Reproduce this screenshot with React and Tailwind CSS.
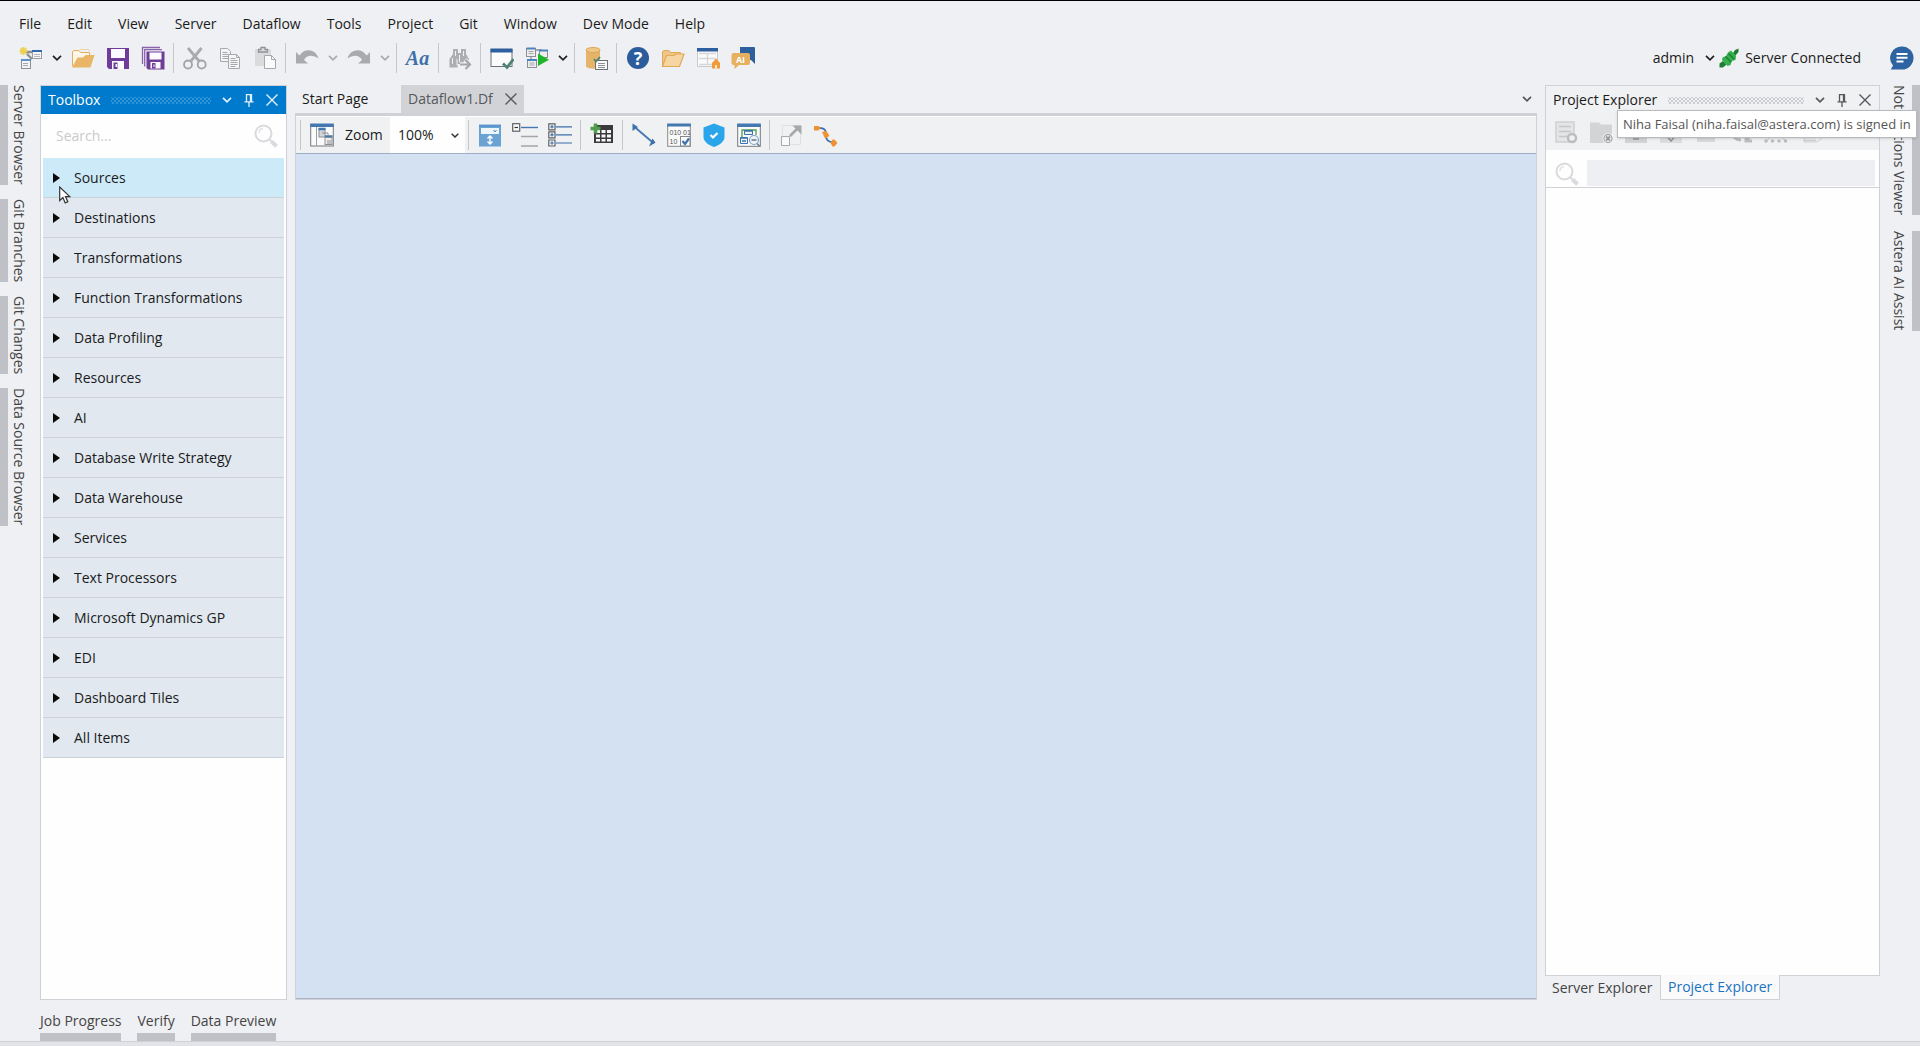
import { useState } from "react";

const menus = ["File", "Edit", "View", "Server", "Dataflow", "Tools", "Project", "Git", "Window", "Dev Mode", "Help"];

const toolboxItems = [
    "Sources",
    "Destinations",
    "Transformations",
    "Function Transformations",
    "Data Profiling",
    "Resources",
    "AI",
    "Database Write Strategy",
    "Data Warehouse",
    "Services",
    "Text Processors",
    "Microsoft Dynamics GP",
    "EDI",
    "Dashboard Tiles",
    "All Items",
];

function Svg({ children, size = 24, className = "" }) {
    return (
        <svg width={size} height={size} viewBox="0 0 24 24" fill="none" className={className} aria-hidden="true">
            {children}
        </svg>
    );
}

function Chevron({ className = "text-[#222]" }) {
    return (
        <svg width="10" height="6" viewBox="0 0 10 6" fill="none" className={className} aria-hidden="true">
            <path d="M1 .8 5 4.8 9 .8" stroke="currentColor" strokeWidth="1.7" />
        </svg>
    );
}

function CloseIcon() {
    return (
        <svg width="12" height="12" viewBox="0 0 12 12" aria-hidden="true">
            <path d="M.5.5l11 11M11.5.5l-11 11" stroke="currentColor" strokeWidth="1.4" />
        </svg>
    );
}

function PinIcon() {
    return (
        <svg width="10" height="13" viewBox="0 0 10 13" fill="none" aria-hidden="true">
            <path d="M2.5 7.500V.7h5v6.800M.5 7.900h9M5 8v5M6.500 1v6.500" stroke="currentColor" strokeWidth="1.3" />
        </svg>
    );
}

function SearchIcon() {
    return (
        <svg width="24" height="24" viewBox="0 0 24 24" fill="none" aria-hidden="true">
            <circle cx="9.500" cy="9.500" r="8" stroke="#d9dadd" strokeWidth="2" />
            <path d="M5 9a4.500 4.500 0 0 1 4-4.500" stroke="#e3e4e6" strokeWidth="1.500" />
            <path d="m15.500 15.500 2 2" stroke="#d9dadd" strokeWidth="2" />
            <path d="m17.500 17.500 5 4.700" stroke="#d9dadd" strokeWidth="4" />
        </svg>
    );
}

/* ---- main toolbar icons ---- */

function NewFlowIcon() {
    return (
        <Svg>
            <path d="M7 6h7M8 8l5 5" stroke="#8c8f94" strokeWidth="2.400" />
            <rect x="13.500" y="4.500" width="9" height="8" fill="#f4f4f4" stroke="#999da3" />
            <path d="M13 5h10" stroke="#2f69ae" strokeWidth="2" />
            <path d="M15 8.500h6M15 10.500h6" stroke="#b5b8bd" />
            <rect x="2.500" y="13.500" width="9" height="9" fill="#f4f4f4" stroke="#8c9097" />
            <path d="M2 14h10" stroke="#5d92c8" strokeWidth="2" />
            <path d="M4 17.500h5M4 19.500h5" stroke="#a5a8ad" />
            <path d="M4.500 1v8M.5 5h8M1.700 2.200l5.600 5.600M7.300 2.200 1.700 7.800" stroke="#efd04f" strokeWidth="1.800" />
        </Svg>
    );
}

function FolderIcon() {
    return (
        <Svg>
            <path d="M1.500 20V5.500L3 4.500h5l1.500 2h9v4" fill="#fdf6ea" stroke="#e5ae5c" />
            <path d="M9 3.500h8l2 1.500" stroke="#ecd2a6" />
            <path d="M1 21.500 6.500 11.500H12l2.500-2.500H23.500L19.500 21.500z" fill="#e9b566" />
        </Svg>
    );
}

function SaveIcon() {
    return (
        <Svg>
            <path d="M1 2h22v21H3l-2-2z" fill="#6f3c97" />
            <path d="M5 3h14v9H5z" fill="#fbfaff" />
            <path d="M6 15h12v8H6z" fill="#fbfaff" />
            <path d="M7.500 16.500h4v6.500h-4z" fill="#6f3c97" />
            <path d="M9.500 18h1.500v3H9.500z" fill="#fbfaff" />
        </Svg>
    );
}

function SaveAllIcon() {
    return (
        <Svg>
            <path d="M1.500 18V1.500H19M3.700 20.500V3.700H21" stroke="#8a62ab" strokeWidth="1.300" />
            <path d="M5.500 5.500H23.500V23.500H7l-1.500-1.500z" fill="#6f3c97" />
            <path d="M8.500 6.500h12v7h-12z" fill="#fbfaff" />
            <path d="M9.500 16h10v6.500h-10z" fill="#fbfaff" />
            <path d="M11 17h3.500v5.500H11z" fill="#6f3c97" />
            <path d="M12.500 18.500h1v2.500h-1z" fill="#fbfaff" />
        </Svg>
    );
}

function CutIcon() {
    return (
        <Svg>
            <path d="M5 2 16 15M18.500 2 8 15" stroke="#a9aaad" strokeWidth="2.800" />
            <circle cx="5" cy="18.500" r="4" stroke="#a2a3a6" strokeWidth="1.800" />
            <circle cx="18.700" cy="18.500" r="4" stroke="#a2a3a6" strokeWidth="1.800" />
        </Svg>
    );
}

function CopyIcon() {
    return (
        <Svg>
            <path d="M2.500 2.500h7l3 3v10h-10z" fill="#f5f5f6" stroke="#a7a8ab" />
            <path d="M4.500 6.500h5M4.500 8.500h6M4.500 10.500h6M4.500 12.500h6" stroke="#a7a8ab" />
            <path d="M10.500 8.500h8l3 3v11h-11z" fill="#f5f5f6" stroke="#a7a8ab" />
            <path d="M18.500 8.500v3h3M12.500 12.500h5M12.500 14.500h7M12.500 16.500h7M12.500 18.500h7M12.500 20.500h5" stroke="#a7a8ab" />
        </Svg>
    );
}

function PasteIcon() {
    return (
        <Svg>
            <path d="M2 3h16v7h-7v10H2z" fill="#dadbdd" />
            <path d="M5.500 3.500H8v-2h4v2h2.500V6h-9z" fill="#dedfe1" stroke="#909194" strokeWidth="1.300" />
            <path d="M11.500 9.500h7l4 4v9h-11z" fill="#fafafa" stroke="#a7a8ab" />
            <path d="M18.500 9.500v4h4" stroke="#a7a8ab" />
        </Svg>
    );
}

function UndoIcon({ flip = false }) {
    return (
        <Svg className={flip ? "-scale-x-100" : ""}>
            <path d="M1 6v11.500h12L9 14C11 9.500 17 8 23.500 12.500 21 3 9.500 1.500 4.500 9.500z" fill="#a9aaad" />
        </Svg>
    );
}

function BinocularsIcon() {
    return (
        <Svg>
            <path d="M5 3h5v4h3V3h5v5l3 5v5H1.500v-5L5 8z" fill="#adaeb1" />
            <path d="M1.500 17.500h8v4h-8z" fill="#adaeb1" />
            <path d="M4.500 12v6M7.500 5v5M11.500 9v7M15.500 5v5M9 13v6" stroke="#f0f1f3" strokeWidth="1" />
            <path d="M12 18.500h8M17 14l5 4.500-5 4.500" stroke="#f0f1f3" strokeWidth="4.500" />
            <path d="M12 18.500h9.500M17.500 14l4.500 4.500-4.500 4.500" stroke="#a5a6a9" strokeWidth="2.200" />
        </Svg>
    );
}

function WindowCheckIcon() {
    return (
        <Svg>
            <rect x="1" y="3.500" width="21" height="17" fill="#fbfbfb" stroke="#6e7175" />
            <path d="M.5 2.500h22v4H.5z" fill="#2d5f9f" />
            <path d="m13 17.500 4 4L23.500 13" stroke="#4d8375" strokeWidth="2.800" />
        </Svg>
    );
}

function RunFlowIcon() {
    return (
        <Svg>
            <path d="M10 4h6v5M6 9v6" stroke="#8c8f94" strokeWidth="1.300" />
            <rect x="1.500" y="2.500" width="9" height="8" fill="#eee" stroke="#8c8f94" />
            <rect x="14.500" y="4.500" width="8" height="7" fill="#eee" stroke="#8c8f94" />
            <rect x="2.500" y="13.500" width="9" height="8" fill="#eee" stroke="#8c8f94" />
            <path d="M14 4.500h9M2 14h10M1.500 2.500h9" stroke="#4a83bd" strokeWidth="1.800" />
            <path d="M3.500 5.500h5M3.500 7.500h5M4.500 17h5M4.500 19h5" stroke="#a3a6aa" />
            <path d="M13 7.500 24 13.700 13 20z" fill="#1eb52a" />
        </Svg>
    );
}

function DatabaseIcon() {
    return (
        <Svg>
            <path d="M2 4v16c0 3.500 13 3.500 14 0V4z" fill="#e5b469" />
            <ellipse cx="9" cy="4" rx="7" ry="2.500" fill="#efc888" stroke="#dda654" />
            <rect x="11.500" y="14.500" width="12" height="9" fill="#fafafa" stroke="#6e7175" />
            <path d="M14 17.500h7M14 19.500h7M14 21.500h7" stroke="#8c8f94" />
            <path d="m10 13 2 2.500 4-4.500" stroke="#4d8375" strokeWidth="1.800" />
        </Svg>
    );
}

function HelpIcon() {
    return (
        <Svg>
            <circle cx="12" cy="12" r="11" fill="#2b5c9b" />
            <text x="12" y="18.500" textAnchor="middle" fontSize="18" fontWeight="700" fill="#fff" fontFamily="Open Sans, sans-serif">?</text>
        </Svg>
    );
}

function OpenFolderIcon() {
    return (
        <Svg>
            <path d="M1.500 20V5.500L3 4.500h5l1.500 2h10v4" fill="#edc688" stroke="#e2a955" />
            <path d="M1.500 20.500 5.500 9.500H13l2-1.500h8L18.500 20.500z" fill="#f5d6a3" stroke="#e2a955" strokeWidth="1.200" />
        </Svg>
    );
}

function TableHomeIcon() {
    return (
        <Svg>
            <rect x="1.500" y="3.500" width="20" height="17" fill="#fafafa" stroke="#c9cacd" />
            <path d="M1 2h21v3.500H1z" fill="#2d5f9f" />
            <path d="M3 12.500h17M11.500 7v12M3 7.500h17M3 18.500h17" stroke="#d5d6d9" strokeWidth="1.300" />
            <path d="m20 12.500 4 4.500v5.500h-8V17z" fill="#f09a3a" />
            <path d="M19.300 19h1.500v3.500h-1.500z" fill="#fff" />
        </Svg>
    );
}

function AiChatIcon() {
    return (
        <svg width="26" height="24" viewBox="0 0 26 24" aria-hidden="true">
            <path d="M10 1h14a1 1 0 0 1 1 1v16l-4-4H10z" fill="#2d5f9f" />
            <path d="M3.500 7h14.500a2 2 0 0 1 2 2v8a2 2 0 0 1-2 2H9l-4.500 4V19h-1a2 2 0 0 1-2-2V9a2 2 0 0 1 2-2z" fill="#e6b05f" />
            <text x="10.500" y="16.500" textAnchor="middle" fontSize="9" fontWeight="700" fill="#fff" fontFamily="Open Sans, sans-serif">AI</text>
        </svg>
    );
}

function PlugIcon() {
    return (
        <svg width="20" height="20" viewBox="0 0 20 20" fill="none" aria-hidden="true">
            <path d="M.5 19.500v-4L4 13l3.500 3.500L4 19.500z" fill="#1f7d34" />
            <path d="m13.500 6 2.500-4 3.500-1.500V4L16 8z" fill="#1f7d34" />
            <path d="M3.500 9.500 7 8l2-3.500 3-2 5 5.500-.5 4-3.500 1-1.500 4-3 1-5.500-6z" fill="#34b04c" />
            <path d="m6.500 8.500 5.500 5.500M9.500 5.500l5.500 5.500" stroke="#1d7a33" strokeWidth="1.300" />
        </svg>
    );
}

function ChatIcon() {
    return (
        <Svg>
            <path d="M12 .5A11.500 11.500 0 1 1 12 23.500H.8l2.200-4A11.500 11.500 0 0 1 12 .5z" fill="#2f64a3" />
            <path d="M6.500 8h11M6.500 11.700h11M6.500 15.500h7" stroke="#fff" strokeWidth="1.900" />
        </Svg>
    );
}

/* ---- dataflow toolbar icons ---- */

function LayoutIcon() {
    return (
        <Svg>
            <rect x=".7" y="1.500" width="22.600" height="21.500" fill="#fbfbfb" stroke="#75787d" />
            <path d="M.2.500h23.600v3.500H.2z" fill="#4478b0" />
            <path d="M6.500 4v19" stroke="#9a9da1" />
            <rect x="9" y="6" width="6" height="8" fill="#d3d5d8" stroke="#8c8f94" />
            <path d="M8.500 6h7M15 13.500h7.500" stroke="#4478b0" strokeWidth="2.400" />
            <rect x="15" y="14.500" width="7" height="7" fill="#eee" stroke="#8c8f94" />
            <path d="M17 18h4M17 20h4M12 10h6v3" stroke="#8c8f94" />
        </Svg>
    );
}

function ExpandAllIcon() {
    return (
        <Svg>
            <path d="M1 1.500h22v22H1z" fill="#6ba2d4" />
            <path d="M3 5h18v6H3z" fill="#eef5fb" />
            <path d="M1 3h22" stroke="#4a8bc5" />
            <path d="m15.500 7 1.500 2 1.500-2" stroke="#4a8bc5" />
            <path d="M12 13v8M9.500 15.500 12 13l2.500 2.500M9.500 18.500 12 21l2.500-2.500" stroke="#fff" strokeWidth="1.400" />
        </Svg>
    );
}

function CollapseIcon() {
    return (
        <svg width="26" height="24" viewBox="0 0 26 24" fill="none" aria-hidden="true">
            <rect x=".7" y=".7" width="7" height="7.500" fill="#fafafa" stroke="#5c5f63" strokeWidth="1.200" />
            <path d="M2.500 4.500h3.500" stroke="#333" strokeWidth="1.200" />
            <path d="M9 4.500h17" stroke="#4478b0" strokeWidth="1.400" />
            <path d="M9 13.500h17M9 23h17" stroke="#a3a6aa" strokeWidth="1.300" />
        </svg>
    );
}

function ExpandListIcon() {
    return (
        <Svg>
            <path d="M.8.800h6.200v6H.8zM.8 8.800h6.200v6H.8zM.8 17h6.200v6H.8z" fill="#fafafa" stroke="#5c5f63" strokeWidth="1.200" />
            <path d="M2.200 3.800h3.500M2.200 11.800h3.500M2.200 20h3.500M4 2v3.600M4 10v3.600M4 18.200v3.600M8 3.800h16M8 11.800h16M8 20h16" stroke="#3b71ac" strokeWidth="1.200" />
        </Svg>
    );
}

function AddGridIcon() {
    return (
        <Svg>
            <path d="M4 2h19v18H4z" fill="#3b3b3d" />
            <path d="M6 7h4v3H6zM11.500 7h4v3h-4zM17 7h4v3h-4zM6 11.500h4v3H6zM11.500 11.500h4v3h-4zM17 11.500h4v3h-4zM6 16h4v2.500H6zM11.500 16h4v2.500h-4zM17 16h4v2.500h-4z" fill="#f6f6f6" />
            <path d="M5.500.500v10M.5 5.500h10" stroke="#4f9e4d" strokeWidth="3.600" />
        </Svg>
    );
}

function LinkIcon() {
    return (
        <Svg>
            <path d="M2 3.500 22 20.500" stroke="#4478b0" strokeWidth="1.800" />
            <path d="M.5.500 6 4 .5 8zM23.500 19.500 17 23.500l3.500-8z" fill="#3b71ac" />
        </Svg>
    );
}

function BinaryIcon() {
    return (
        <Svg>
            <rect x=".7" y="1.500" width="22.600" height="21.800" fill="#fafafa" stroke="#85888c" />
            <path d="M.2.500h23.600v3H.2z" fill="#4478b0" />
            <text x="2.500" y="12" fontSize="7" fill="#555" fontFamily="Liberation Sans, sans-serif">010 01</text>
            <text x="2.500" y="21" fontSize="7" fill="#555" fontFamily="Liberation Sans, sans-serif">10</text>
            <rect x="13.500" y="13.500" width="9.500" height="9.500" fill="#fafafa" stroke="#85888c" />
            <path d="m15.500 18 2.500 3 4-5.500" stroke="#3b71ac" strokeWidth="2.200" />
        </Svg>
    );
}

function ShieldIcon() {
    return (
        <Svg>
            <path d="M12 .500 22.500 4.500V14c0 4.500-5 8-10.500 10C6.500 22 1.500 18.500 1.500 14V4.500z" fill="#2ba5ea" />
            <path d="m8.500 12 2.500 2.500 4.500-4.500" stroke="#fff" strokeWidth="2.200" />
        </Svg>
    );
}

function PreviewIcon() {
    return (
        <Svg>
            <rect x=".7" y="1.500" width="22.600" height="21.800" fill="#fafafa" stroke="#75787d" />
            <path d="M.2.500h23.600v3.500H.2z" fill="#4478b0" />
            <path d="M5 14V7h14v5" stroke="#4f9e4d" strokeWidth="1.300" />
            <path d="M7.500 7.500h8v4h-8zM3.500 14.500h7v6h-7z" fill="#eef3f8" stroke="#3b71ac" />
            <path d="M7.500 8h8M3.500 15h7M5 18h4" stroke="#3b71ac" strokeWidth="1.500" />
            <circle cx="17" cy="17" r="4.500" fill="#eef3f8" stroke="#7ba3cb" strokeWidth="1.200" />
            <path d="M14.500 17h5M20 20.500l2.500 2.500" stroke="#6b7785" strokeWidth="1.400" />
        </Svg>
    );
}

function ResizeIcon() {
    return (
        <Svg>
            <path d="M3.500 2.500h18v19h-18z" stroke="#dfe0e2" />
            <path d="M2.500 13.500h8v9h-8z" fill="#fafafa" stroke="#a7a8ab" />
            <path d="m11 13 8-8" stroke="#a7a8ab" strokeWidth="2.600" />
            <path d="M13.500 2.500h9v9z" fill="#a7a8ab" />
        </Svg>
    );
}

function RouteIcon() {
    return (
        <Svg>
            <path d="M2 5c10-1 10 3 10 7s1 8 10 7" stroke="#3b71ac" strokeWidth="1.700" />
            <path d="M0 3h4.500l2 2-2 2.500H0zM8 9l4.500-1 3 5-4.500 2.500zM16.500 20l2-3.500h2L23.500 20l-3 3.500h-2z" fill="#f09233" />
        </Svg>
    );
}

/* ---- project explorer icons ---- */

function ServerGearIcon() {
    return (
        <Svg>
            <path d="M2 2h18v20H2z" fill="#e4e5e7" stroke="#cfd0d3" strokeWidth="1.500" />
            <path d="M5 6.500h12M5 11.500h12M5 16.500h9" stroke="#c6c7ca" strokeWidth="1.500" />
            <circle cx="18" cy="18" r="4" fill="#f0f1f3" stroke="#bcbdc0" strokeWidth="2.500" />
        </Svg>
    );
}

function FolderRemoveIcon() {
    return (
        <Svg>
            <path d="M1 2.500h9l2 2h11V23H1z" fill="#d3d4d6" />
            <circle cx="19" cy="18.500" r="5.500" fill="#f5f5f6" />
            <circle cx="19" cy="18.500" r="4" stroke="#a9aaad" strokeWidth="1.300" />
            <path d="m17 16.500 4 4M21 16.500l-4 4" stroke="#96979a" strokeWidth="1.800" />
        </Svg>
    );
}

function FolderMutedIcon() {
    return (
        <Svg>
            <path d="M1 2.500h9l2 2h11V23H1z" fill="#d3d4d6" />
            <path d="M9 19h6" stroke="#96979a" strokeWidth="1.500" />
        </Svg>
    );
}

function FolderDownIcon() {
    return (
        <Svg>
            <path d="M1 2.500h22V23H1z" fill="#dcdddf" />
            <path d="m8.500 17 3.500 4 3.500-4" stroke="#96979a" strokeWidth="1.700" />
        </Svg>
    );
}

function FolderSmallIcon() {
    return (
        <Svg>
            <path d="M3 2.500h18V22H3z" fill="#d8d9db" />
        </Svg>
    );
}

function SyncIcon() {
    return (
        <Svg>
            <path d="M3 11c0 6 4 9 9 9M21 12c0 4-2 7-4 8.500M17 15v6h6" stroke="#bcbdc0" strokeWidth="3" />
        </Svg>
    );
}

function TreeIcon() {
    return (
        <Svg>
            <path d="M12 2v12M2 21l5-4 5-3 5 3 5 4" stroke="#d5d6d9" strokeWidth="1.200" />
            <circle cx="2" cy="21" r="1.800" fill="#bcbdc0" />
            <circle cx="8.500" cy="21" r="1.800" fill="#bcbdc0" />
            <circle cx="15" cy="21" r="1.800" fill="#bcbdc0" />
            <circle cx="21.500" cy="21" r="1.800" fill="#bcbdc0" />
        </Svg>
    );
}

function PagesIcon() {
    return (
        <Svg>
            <path d="M6 3h16v16l-4 3H5z" fill="#f2f2f3" stroke="#d0d1d4" />
            <path d="M2 14h14M5 17.500h12M5 20.500h12" stroke="#cfd0d3" strokeWidth="1.500" />
        </Svg>
    );
}

/* ---- building blocks ---- */

function ToolButton({ label, children }) {
    return (
        <button type="button" aria-label={label} className="flex h-9 w-[35px] shrink-0 items-center justify-center">
            {children}
        </button>
    );
}

function DropButton({ label, muted = false }) {
    return (
        <button type="button" aria-label={label} className="flex h-9 w-[17px] shrink-0 items-center justify-center">
            <Chevron className={muted ? "text-[#a9aaad]" : "text-[#222]"} />
        </button>
    );
}

function Divider() {
    return <span className="mx-[3px] h-[30px] w-px shrink-0 bg-[#c6c7cb]" />;
}

function RailTab({ label, right = false }) {
    return (
        <button
            type="button"
            className={
                right
                    ? "border-r-8 border-[#c0c1c6] pr-1 leading-[18px] text-[#444] [writing-mode:vertical-rl]"
                    : "border-l-8 border-[#c0c1c6] pl-[2px] leading-[18px] text-[#444] [writing-mode:vertical-rl]"
            }
        >
            {label}
        </button>
    );
}

function PanelHeader({ title, active = false }) {
    return (
        <div
            className={
                active
                    ? "flex h-7 items-center bg-[#007acc] pr-2 pl-[7px] text-white"
                    : "flex h-7 items-center pr-2 pl-[7px] text-[#1b1b1b]"
            }
        >
            <h2>{title}</h2>
            <span
                className={
                    active
                        ? "mx-[11px] h-[7px] flex-1 bg-[radial-gradient(#5fb0e6_1px,transparent_1px),radial-gradient(#5fb0e6_1px,transparent_1px)] bg-[length:4px_4px] bg-[position:0_0,2px_2px] opacity-50"
                        : "mx-[11px] h-[7px] flex-1 bg-[radial-gradient(#b4b5b9_1px,transparent_1px),radial-gradient(#b4b5b9_1px,transparent_1px)] bg-[length:4px_4px] bg-[position:0_0,2px_2px] opacity-60"
                }
            />
            <div className={active ? "flex items-center gap-3 text-[#e4f1fa]" : "flex items-center gap-3 text-[#55585c]"}>
                <button type="button" aria-label={title + " options"}><Chevron className="" /></button>
                <button type="button" aria-label={"Pin " + title}><PinIcon /></button>
                <button type="button" aria-label={"Close " + title}><CloseIcon /></button>
            </div>
        </div>
    );
}

function MainToolbar() {
    return (
        <div className="flex h-9 items-center pl-[13px]">
            <ToolButton label="New"><NewFlowIcon /></ToolButton>
            <DropButton label="New options" />
            <ToolButton label="Open"><FolderIcon /></ToolButton>
            <ToolButton label="Save"><SaveIcon /></ToolButton>
            <ToolButton label="Save all"><SaveAllIcon /></ToolButton>
            <Divider />
            <ToolButton label="Cut"><CutIcon /></ToolButton>
            <ToolButton label="Copy"><CopyIcon /></ToolButton>
            <ToolButton label="Paste"><PasteIcon /></ToolButton>
            <Divider />
            <ToolButton label="Undo"><UndoIcon /></ToolButton>
            <DropButton label="Undo history" muted />
            <ToolButton label="Redo"><UndoIcon flip /></ToolButton>
            <DropButton label="Redo history" muted />
            <Divider />
            <ToolButton label="Font">
                <span className="font-['Liberation_Serif',serif] text-xl font-bold text-[#3f70aa] italic">Aa</span>
            </ToolButton>
            <Divider />
            <ToolButton label="Find"><BinocularsIcon /></ToolButton>
            <Divider />
            <ToolButton label="Verify"><WindowCheckIcon /></ToolButton>
            <ToolButton label="Run"><RunFlowIcon /></ToolButton>
            <DropButton label="Run options" />
            <Divider />
            <ToolButton label="Database"><DatabaseIcon /></ToolButton>
            <Divider />
            <ToolButton label="Help"><HelpIcon /></ToolButton>
            <ToolButton label="Samples"><OpenFolderIcon /></ToolButton>
            <ToolButton label="Start page"><TableHomeIcon /></ToolButton>
            <ToolButton label="AI chat"><AiChatIcon /></ToolButton>

            <div className="ml-auto flex items-center pr-[6px] text-[#1b1b1b]">
                <button type="button" className="flex items-center gap-[11px]">
                    admin
                    <Chevron />
                </button>
                <span className="ml-1 flex items-center gap-[6px]">
                    <PlugIcon />
                    Server Connected
                </span>
                <button type="button" aria-label="Messages" className="ml-[29px]"><ChatIcon /></button>
            </div>
        </div>
    );
}

function Toolbox({ selected, onSelect }) {
    return (
        <section className="flex w-[247px] shrink-0 flex-col border border-[#cfd1d6] bg-[#fefefe]">
            <PanelHeader title="Toolbox" active />
            <label className="flex h-11 items-center pr-2 pl-[15px]">
                <input
                    type="search"
                    aria-label="Search toolbox"
                    placeholder="Search..."
                    className="min-w-0 flex-1 bg-transparent outline-none placeholder:text-[#c9cacd]"
                />
                <SearchIcon />
            </label>
            <ul className="mx-[2px]">
                {toolboxItems.map((item) => (
                    <li key={item} className="relative border-b border-[#cdd2d9]">
                        <button
                            type="button"
                            onClick={() => onSelect(item)}
                            className={
                                selected === item
                                    ? "flex h-[39px] w-full items-center gap-[14px] bg-[#cdeaf9] pl-[10px] text-[#1b1b1b]"
                                    : "flex h-[39px] w-full items-center gap-[14px] bg-[#e1e8f0] pl-[10px] text-[#1b1b1b]"
                            }
                        >
                            <svg width="7" height="10" viewBox="0 0 7 10" aria-hidden="true">
                                <path d="M0 0 7 5 0 10z" fill="#0a0a0a" />
                            </svg>
                            {item}
                        </button>
                        {selected === item && (
                            <svg width="12" height="18" viewBox="0 0 12 18" className="absolute top-7 left-4 z-10" aria-hidden="true">
                                <path d="M.7 1v13.500l3.200-3 2.300 5.400 2.600-1.100-2.300-5.200h4.300z" fill="#fff" stroke="#333" strokeWidth="1.200" />
                            </svg>
                        )}
                    </li>
                ))}
            </ul>
        </section>
    );
}

function Designer() {
    return (
        <main className="ml-2 flex min-w-0 flex-1 flex-col">
            <div className="flex h-7 items-center text-[#1b1b1b]">
                <button type="button" className="h-full w-[106px] pl-[7px] text-left">Start Page</button>
                <div className="flex h-full items-center gap-3 bg-[#d2d3d7] pr-[7px] pl-[7px] text-[#55585c]">
                    <button type="button">Dataflow1.Df</button>
                    <button type="button" aria-label="Close Dataflow1.Df"><CloseIcon /></button>
                </div>
                <button type="button" aria-label="Open documents" className="mr-[5px] ml-auto text-[#55585c]"><Chevron className="" /></button>
            </div>
            <div className="flex flex-1 flex-col border border-t-[3px] border-[#cfd1d6]">
                <div className="flex h-[38px] items-center border-t border-b border-t-white border-b-[#9fb0c6] bg-[#f0f1f3] pl-[1px]">
                    <Divider />
                    <ToolButton label="Overview"><LayoutIcon /></ToolButton>
                    <label htmlFor="zoom" className="w-[51px] pl-[6px] text-[#1b1b1b]">Zoom</label>
                    <div className="relative h-full">
                        <select id="zoom" defaultValue="100%" className="h-full w-[75px] appearance-none bg-[#fefefe] pl-2 text-[#1b1b1b] outline-none">
                            <option>50%</option>
                            <option>100%</option>
                            <option>200%</option>
                        </select>
                        <svg width="8" height="5" viewBox="0 0 8 5" fill="none" className="pointer-events-none absolute top-4 right-[6px]" aria-hidden="true">
                            <path d="M.7.700 4 4 7.300.700" stroke="#333" strokeWidth="1.500" />
                        </svg>
                    </div>
                    <Divider />
                    <ToolButton label="Auto size"><ExpandAllIcon /></ToolButton>
                    <ToolButton label="Collapse all"><CollapseIcon /></ToolButton>
                    <ToolButton label="Expand all"><ExpandListIcon /></ToolButton>
                    <Divider />
                    <ToolButton label="Add grid"><AddGridIcon /></ToolButton>
                    <Divider />
                    <ToolButton label="Link"><LinkIcon /></ToolButton>
                    <ToolButton label="Data quality"><BinaryIcon /></ToolButton>
                    <ToolButton label="Security"><ShieldIcon /></ToolButton>
                    <ToolButton label="Preview"><PreviewIcon /></ToolButton>
                    <Divider />
                    <ToolButton label="Resize"><ResizeIcon /></ToolButton>
                    <ToolButton label="Route links"><RouteIcon /></ToolButton>
                </div>
                <div className="flex-1 border-b border-[#aab4c6] bg-[#d4e1f2]" />
            </div>
        </main>
    );
}

function ProjectExplorer() {
    return (
        <aside className="ml-2 flex w-[335px] shrink-0 flex-col">
            <div className="flex flex-1 flex-col border border-[#cfd1d6] bg-[#fefefe]">
                <div className="relative bg-[#f0f1f3]">
                    <PanelHeader title="Project Explorer" />
                    <div role="tooltip" className="absolute top-6 left-[71px] z-10 border border-[#b9babd] bg-white px-[5px] text-[13px] leading-[26px] whitespace-nowrap text-[#555] shadow-sm">
                        Niha Faisal (niha.faisal@astera.com) is signed in
                    </div>
                    <div className="flex h-9 items-center pl-[2px]">
                        <ToolButton label="New project"><ServerGearIcon /></ToolButton>
                        <ToolButton label="Close project"><FolderRemoveIcon /></ToolButton>
                        <ToolButton label="Add folder"><FolderMutedIcon /></ToolButton>
                        <ToolButton label="Add item"><FolderDownIcon /></ToolButton>
                        <ToolButton label="Folder"><FolderSmallIcon /></ToolButton>
                        <ToolButton label="Refresh"><SyncIcon /></ToolButton>
                        <ToolButton label="Dependencies"><TreeIcon /></ToolButton>
                        <ToolButton label="Properties"><PagesIcon /></ToolButton>
                    </div>
                </div>
                <label className="flex h-[38px] items-end gap-2 border-b border-[#cfd1d6] pr-1 pb-px pl-[9px]">
                    <SearchIcon />
                    <input type="search" aria-label="Search project" className="h-[26px] min-w-0 flex-1 bg-[#eeeff2] px-2 outline-none" />
                </label>
            </div>
            <div className="flex h-6 text-[#444]">
                <button type="button" className="w-[115px] pl-[7px] text-left leading-6">Server Explorer</button>
                <button type="button" className="-mt-px h-[25px] border border-t-0 border-[#cfd1d6] bg-[#fafafb] px-[7px] leading-6 text-[#1a73bf]">
                    Project Explorer
                </button>
            </div>
        </aside>
    );
}

export default function App() {
    const [selected, setSelected] = useState("Sources");

    return (
        <div className="flex min-h-screen flex-col border-t border-black bg-[#eff0f3] font-['Open_Sans','Noto_Sans',sans-serif] text-sm text-[#1b1b1b]">
            <nav className="mt-3 flex h-[22px] items-center gap-[26px] pl-[19px]">
                {menus.map((menu) => (
                    <button key={menu} type="button">{menu}</button>
                ))}
            </nav>
            <div className="mt-[5px] mb-[9px]">
                <MainToolbar />
            </div>

            <div className="flex flex-1">
                <div className="flex w-10 shrink-0 flex-col items-start gap-[14px]">
                    <RailTab label="Server Browser" />
                    <RailTab label="Git Branches" />
                    <RailTab label="Git Changes" />
                    <RailTab label="Data Source Browser" />
                </div>
                <Toolbox selected={selected} onSelect={setSelected} />
                <Designer />
                <ProjectExplorer />
                <div className="flex w-10 shrink-0 flex-col items-end gap-4">
                    <RailTab label="Notifications Viewer" right />
                    <RailTab label="Astera AI Assist" right />
                </div>
            </div>

            <footer className="mt-[11px] border-b-4 border-[#e3e4e7]">
                <div className="flex h-[31px] items-end gap-4 border-b border-[#cfd1d6] pl-10 text-[#444]">
                    <button type="button" className="border-b-8 border-[#c0c1c6] pb-px leading-[22px]">Job Progress</button>
                    <button type="button" className="border-b-8 border-[#c0c1c6] pb-px leading-[22px]">Verify</button>
                    <button type="button" className="border-b-8 border-[#c0c1c6] pb-px leading-[22px]">Data Preview</button>
                </div>
            </footer>
        </div>
    );
}
